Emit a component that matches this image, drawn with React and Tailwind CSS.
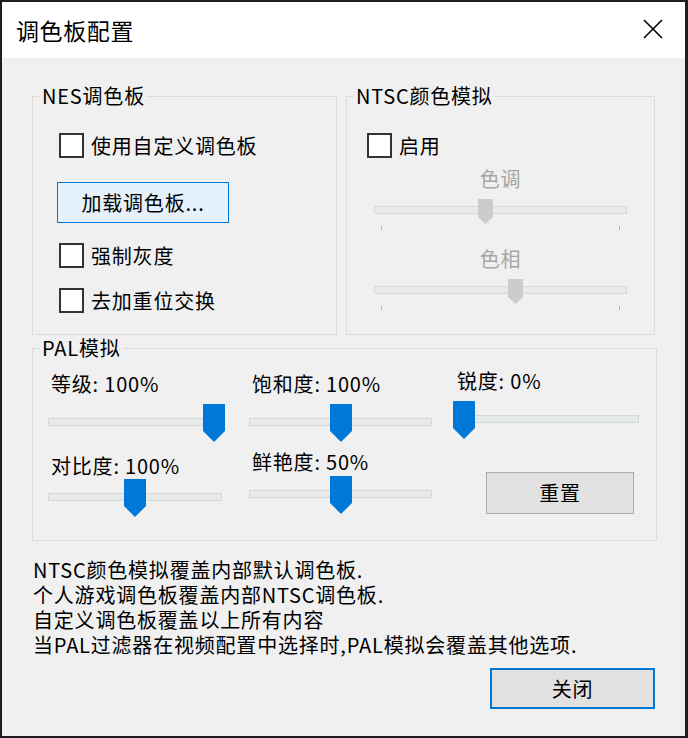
const font = "font-['Noto_Sans_CJK_SC','Noto_Sans',sans-serif]";

function Thumb({ disabled }) {
  if (disabled) {
    return (
      <svg width="15" height="25" viewBox="0 0 15 25">
        <path d="M0 0H15V18L7.5 25L0 18Z" fill="#cccccc" />
      </svg>
    );
  }
  return (
    <svg width="22" height="38" viewBox="0 0 22 38">
      <path d="M0 0H22V27L11 38L0 27Z" fill="#0078d7" />
    </svg>
  );
}

function CheckRow({ label, className = "" }) {
  return (
    <label className={`flex items-center gap-[7px] ${className}`}>
      <span className="w-[25px] h-[25px] border-2 border-[#333333] bg-white" />
      <span className="leading-[24px]">{label}</span>
    </label>
  );
}

function Group({ title, className = "", children }) {
  return (
    <fieldset className={`border border-[#dcdcdc] ${className}`}>
      <legend className="ml-[7px] px-[2px] leading-[24px]">{title}</legend>
      {children}
    </fieldset>
  );
}

// disabled NTSC slider with tick marks at both ends
function HueSlider({ label, at, labelGap, className = "" }) {
  return (
    <div className={`ml-[27px] w-[253px] ${className}`}>
      <div className={`text-center leading-[24px] text-[#a6a6a6] ${labelGap}`}>{label}</div>
      <div className="relative h-[25px] mt-[8px] pt-[7px]">
        <div className="h-[8px] border border-[#d9d9d9] bg-[#e8eaea]" />
        <span className={`absolute top-0 ${at}`}>
          <Thumb disabled />
        </span>
      </div>
      <div className="flex justify-between px-[7px] mt-[2px] h-[4px]">
        <span className="w-px h-full bg-[#b8b8b8]" />
        <span className="w-px h-full bg-[#b8b8b8]" />
      </div>
    </div>
  );
}

function PalSlider({ label, at, className = "", labelClass = "ml-[3px]", gap = "mt-[8px]" }) {
  return (
    <div className={className}>
      <div className={`leading-[24px] ${labelClass}`}>{label}</div>
      <div className={`relative h-[38px] pt-[14px] ${gap}`}>
        <div className="h-[8px] border border-[#d6d6d6] bg-[#e7eaea]" />
        <span className={`absolute top-0 ${at}`}>
          <Thumb />
        </span>
      </div>
    </div>
  );
}

export default function App() {
  return (
    <div
      className={`w-[688px] h-[738px] flex flex-col border-t-2 border-l-2 border-b-2 border-r-[3px] border-[#1e1e1e] bg-[#f0f0f0] text-black text-[20px] tracking-[0.8px] ${font}`}
    >
      <div className="h-[56px] shrink-0 bg-white flex items-center justify-between pl-[14px] pr-[22px]">
        <span className="text-[23px] tracking-[0.6px] leading-[30px]">调色板配置</span>
        <svg width="20" height="20" viewBox="0 0 20 20" className="-mt-[3px]">
          <path d="M1 1L19 19M19 1L1 19" stroke="#000" strokeWidth="1.6" />
        </svg>
      </div>

      <div className="flex-1 flex flex-col px-[30px] pt-[26px]">
        <div className="flex gap-[9px]">
          <Group title="NES调色板" className="w-[306px] h-[251px]">
            <div className="flex flex-col items-start">
              <CheckRow label="使用自定义调色板" className="mt-[25px] ml-[26px]" />
              <button className="mt-[24px] ml-[24px] w-[172px] h-[41px] border border-[#0078d7] bg-[#e5f1fb] leading-[24px]">
                加载调色板...
              </button>
              <CheckRow label="强制灰度" className="mt-[20px] ml-[26px]" />
              <CheckRow label="去加重位交换" className="mt-[20px] ml-[26px]" />
            </div>
          </Group>

          <Group title="NTSC颜色模拟" className="w-[310px] h-[251px]">
            <CheckRow label="启用" className="mt-[25px] ml-[20px]" />
            <HueSlider label="色调" at="left-[104px]" labelGap="mt-[9px]" />
            <HueSlider label="色相" at="left-[134px]" labelGap="mt-[17px]" />
          </Group>
        </div>

        <Group title="PAL模拟" className="mt-[1px] w-[625px] h-[205px]">
          <div className="flex">
            <div className="ml-[15px] w-[174px]">
              <PalSlider label="等级: 100%" at="left-[155px]" className="mt-[12px]" />
              <PalSlider label="对比度: 100%" at="left-[76px]" className="mt-[12px]" gap="mt-[1px]" />
            </div>
            <div className="ml-[27px] w-[183px]">
              <PalSlider label="饱和度: 100%" at="left-[81px]" className="mt-[12px]" />
              <PalSlider label="鲜艳度: 50%" at="left-[81px]" className="mt-[8px]" gap="mt-[2px]" />
            </div>
            <div className="ml-[21px] w-[186px]">
              <PalSlider label="锐度: 0%" at="left-0" className="mt-[9px]" labelClass="ml-[4px]" />
              <button className="mt-[33px] ml-[33px] w-[148px] h-[42px] border border-[#adadad] bg-[#e1e1e1] leading-[24px]">
                重置
              </button>
            </div>
          </div>
        </Group>

        <div className="mt-[16px] ml-[1px] leading-[25px]">
          <p>NTSC颜色模拟覆盖内部默认调色板.</p>
          <p>个人游戏调色板覆盖内部NTSC调色板.</p>
          <p>自定义调色板覆盖以上所有内容</p>
          <p>当PAL过滤器在视频配置中选择时,PAL模拟会覆盖其他选项.</p>
        </div>

        <button className="self-end mt-[11px] w-[165px] h-[41px] border-2 border-[#0078d7] bg-[#e1e1e1] leading-[24px]">
          关闭
        </button>
      </div>
    </div>
  );
}
